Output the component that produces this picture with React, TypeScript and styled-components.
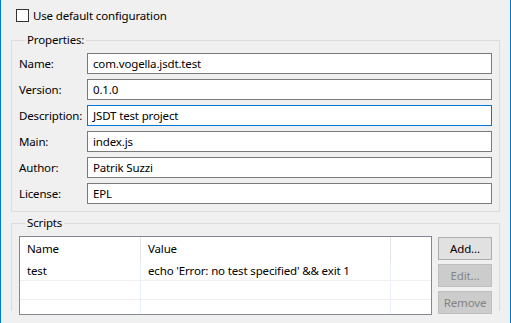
import styled, { createGlobalStyle } from "styled-components";

const GlobalStyle = createGlobalStyle`
	html, body {
		margin: 0;
		padding: 0;
		background: #f0f0f0;
	}
	* {
		box-sizing: border-box;
	}
`;

const Page = styled.div`
	width: 511px;
	height: 323px;
	overflow: hidden;
	background: #f0f0f0;
	border-left: 1px solid #0078d7;
	border-right: 1px solid #0078d7;
	padding: 0 10px;
	font-family: "Noto Sans", "Liberation Sans", sans-serif;
	font-size: 11.5px;
	letter-spacing: -0.15px;
	color: #000;
`;

const CheckRow = styled.label`
	display: flex;
	align-items: center;
	height: 31px;
	padding-left: 5px;
	gap: 4px;
`;

const CheckBox = styled.span`
	width: 13px;
	height: 13px;
	border: 1px solid #333;
	background: #fff;
`;

const Group = styled.fieldset<{ $open?: boolean }>`
	margin: ${({ $open }) => ($open ? "3px 0 0" : "1px 0 0")};
	padding: ${({ $open }) => ($open ? "5px 7px 0" : "5px 7px 7px")};
	border: 1px solid #dcdcdc;
	border-bottom: ${({ $open }) => ($open ? "none" : "1px solid #dcdcdc")};
	min-width: 0;
	height: ${({ $open }) => ($open ? "96px" : "auto")};
`;

const Legend = styled.legend`
	margin-left: 6px;
	padding: 0 2px;
	line-height: 16px;
`;

const Form = styled.div`
	display: grid;
	grid-template-columns: 68px 1fr;
	row-gap: 5px;
	align-items: center;
`;

const Label = styled.span`
	line-height: 21px;
	white-space: nowrap;
`;

const Field = styled.div<{ $focus?: boolean }>`
	height: 21px;
	border: 1px solid ${({ $focus }) => ($focus ? "#0078d7" : "#7a7a7a")};
	background: #fff;
	padding: 0 5px;
	line-height: 19px;
	white-space: nowrap;
`;

const ScriptsBody = styled.div`
	display: flex;
	gap: 6px;
`;

const Table = styled.div`
	flex: 1;
	height: 79px;
	border: 1px solid #828790;
	background: #fff;
	display: grid;
	grid-template-columns: 121px 250px 1fr;
	grid-template-rows: 25px 19px 19px 19px;
	overflow: hidden;
`;

const HeadCell = styled.div<{ $last?: boolean }>`
	border-right: ${({ $last }) => ($last ? "none" : "1px solid #e5e5e5")};
	padding-left: 7px;
	line-height: 24px;
`;

const Cell = styled.div<{ $last?: boolean }>`
	border-right: ${({ $last }) => ($last ? "none" : "1px solid #eaf0f8")};
	border-bottom: 1px solid #f0f0f0;
	padding-left: 7px;
	line-height: 18px;
	white-space: nowrap;
`;

const Buttons = styled.div`
	display: flex;
	flex-direction: column;
	gap: 4px;
	padding-top: 1px;
	width: 54px;
`;

const Button = styled.button`
	height: 23px;
	padding: 0;
	font-family: inherit;
	font-size: inherit;
	letter-spacing: inherit;
	color: #000;
	background: #e1e1e1;
	border: 1px solid #adadad;

	&:disabled {
		color: #838383;
		background: #cccccc;
		border-color: #bfbfbf;
	}
`;

const props = [
	{ label: "Name:", value: "com.vogella.jsdt.test" },
	{ label: "Version:", value: "0.1.0" },
	{ label: "Description:", value: "JSDT test project", focus: true },
	{ label: "Main:", value: "index.js" },
	{ label: "Author:", value: "Patrik Suzzi" },
	{ label: "License:", value: "EPL" },
];

const rows = [
	["test", "echo 'Error: no test specified' && exit 1"],
	["", ""],
	["", ""],
];

export default function App() {
	return (
		<>
			<GlobalStyle />
			<Page>
				<CheckRow>
					<CheckBox />
					<span>Use default configuration</span>
				</CheckRow>

				<Group>
					<Legend>Properties:</Legend>
					<Form>
						{props.map((p) => (
							<>
								<Label key={p.label}>{p.label}</Label>
								<Field key={p.label + "-f"} $focus={p.focus}>
									{p.value}
								</Field>
							</>
						))}
					</Form>
				</Group>

				<Group $open>
					<Legend>Scripts</Legend>
					<ScriptsBody>
						<Table>
							<HeadCell>Name</HeadCell>
							<HeadCell>Value</HeadCell>
							<HeadCell $last />
							{rows.map((r, i) => (
								<>
									<Cell key={i + "a"}>{r[0]}</Cell>
									<Cell key={i + "b"}>{r[1]}</Cell>
									<Cell key={i + "c"} $last />
								</>
							))}
						</Table>
						<Buttons>
							<Button>Add...</Button>
							<Button disabled>Edit...</Button>
							<Button disabled>Remove</Button>
						</Buttons>
					</ScriptsBody>
				</Group>
			</Page>
		</>
	);
}
